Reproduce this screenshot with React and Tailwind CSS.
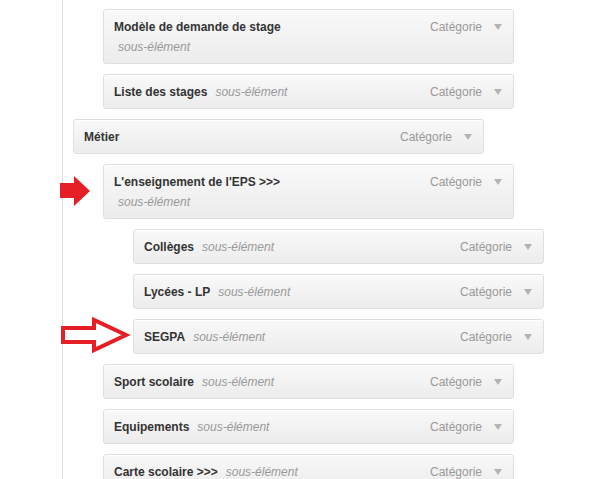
const items = [
  { title: "Modèle de demande de stage", depth: 1, wrap: true },
  { title: "Liste des stages", depth: 1 },
  { title: "Métier", depth: 0, noSub: true },
  { title: "L'enseignement de l'EPS >>>", depth: 1, wrap: true, arrow: "filled" },
  { title: "Collèges", depth: 2 },
  { title: "Lycées - LP", depth: 2 },
  { title: "SEGPA", depth: 2, arrow: "outline" },
  { title: "Sport scolaire", depth: 1 },
  { title: "Equipements", depth: 1 },
  { title: "Carte scolaire >>>", depth: 1 },
];

const indent = ["ml-[10px]", "ml-[40px]", "ml-[70px]"];

const Caret = () => (
  <svg width="8" height="6" viewBox="0 0 8 6" className="ml-[12px] shrink-0">
    <polygon points="0,0 8,0 4,6" fill="#b3b3b3" />
  </svg>
);

const FilledArrow = () => (
  <svg width="34" height="32" viewBox="0 0 34 32" className="absolute left-[-45px] top-[11px]">
    <polygon points="2,8 16,8 16,1 32,16 16,31 16,23 2,23" fill="#e61e25" />
  </svg>
);

const OutlineArrow = () => (
  <svg width="72" height="40" viewBox="0 0 72 40" className="absolute left-[-73px] top-[-3px]">
    <polygon
      points="3,12 34,12 34,4 66,19 34,34 34,26 3,26"
      fill="none"
      stroke="#e61e25"
      strokeWidth="4"
      strokeLinejoin="miter"
    />
  </svg>
);

const MenuItem = ({ item }) => (
  <div className={`relative ${indent[item.depth]}`}>
    {item.arrow === "filled" && <FilledArrow />}
    {item.arrow === "outline" && <OutlineArrow />}
    <div
      className={`w-[411px] flex justify-between border border-[#dfdfdf] rounded-[3px] bg-gradient-to-b from-[#f9f9f9] to-[#ececec] shadow-[inset_0_1px_0_#fff] pl-[10px] pr-[11px] text-[12px] ${
        item.wrap ? "items-start pt-[7px] pb-[6px] leading-[20px]" : "h-[35px] items-center pt-[1px] leading-[32px]"
      }`}
    >
      <div className="min-w-0">
        <span className="font-bold text-[#333]">{item.title}</span>
        {!item.noSub &&
          (item.wrap ? (
            <span className="block pl-[4px] italic text-[#999]">sous-élément</span>
          ) : (
            <span className="pl-[8px] italic text-[#999]">sous-élément</span>
          ))}
      </div>
      <div className={`flex items-center text-[#999] ${item.wrap ? "h-[20px]" : ""}`}>
        <span>Catégorie</span>
        <Caret />
      </div>
    </div>
  </div>
);

export default function App() {
  return (
    <div className="w-[615px] h-[479px] overflow-hidden bg-white font-['Liberation_Sans',Arial,sans-serif]">
      <div className="ml-[62px] h-full border-l border-[#dfdfdf] pt-[9px] flex flex-col gap-[10px]">
        {items.map((item) => (
          <MenuItem key={item.title} item={item} />
        ))}
      </div>
    </div>
  );
}
